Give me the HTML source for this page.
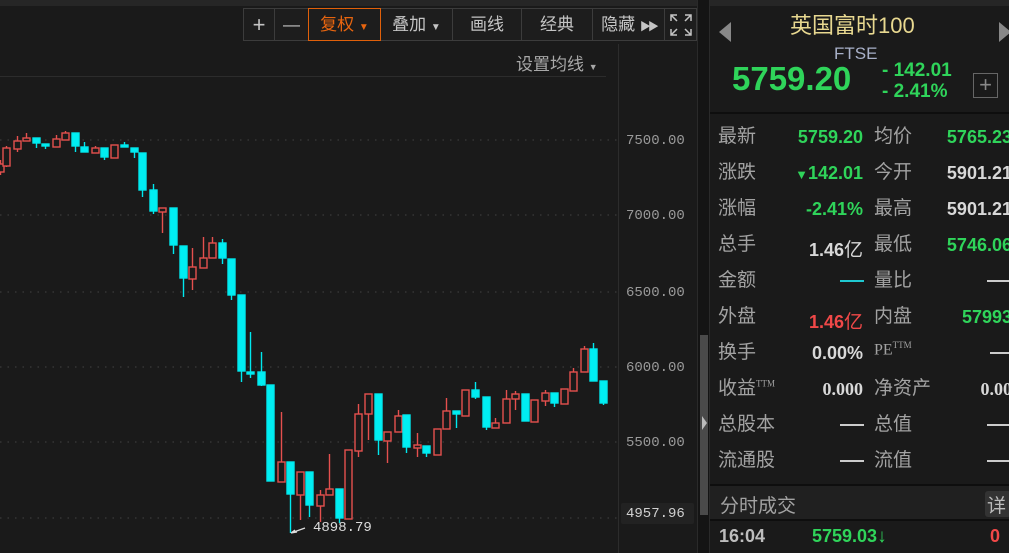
<!DOCTYPE html>
<html><head><meta charset="utf-8"><style>
*{margin:0;padding:0;box-sizing:border-box}
body{width:1009px;height:553px;background:#1a1a1a;position:relative;overflow:hidden;font-family:"Liberation Sans","Noto Sans CJK SC",sans-serif;color:#c8c8c8}
.a{position:absolute;white-space:nowrap}
.tb{position:absolute;top:8px;height:33px;border:1px solid #3c3c3c;background:#1d1d1d;font-size:17px;color:#c4c4c4;text-align:center;line-height:31px}
.ax{position:absolute;left:626px;font-family:"Liberation Mono",monospace;font-size:14px;color:#9a9a9a}
.lb{position:absolute;font-size:19px;color:#a2a2a2;font-family:"Liberation Sans","Noto Sans CJK SC",sans-serif;margin-top:-3px}
.v{position:absolute;font-size:18px;font-weight:bold;text-align:right;color:#d8d8d8;margin-top:2px}
.g{color:#2fd45a}.r{color:#f04848}
</style></head><body>
<div class="a" style="left:0;top:0;width:1009px;height:6px;background:#262626"></div>
<div class="tb" style="left:243px;width:32px;font-size:22px">+</div>
<div class="tb" style="left:274px;width:35px">—</div>
<div class="tb" style="left:308px;width:73px;border-color:#e0600a;color:#e8650f;z-index:2">复权 <span style="font-size:10px">▼</span></div>
<div class="tb" style="left:380px;width:73px">叠加 <span style="font-size:10px">▼</span></div>
<div class="tb" style="left:452px;width:70px">画线</div>
<div class="tb" style="left:521px;width:72px">经典</div>
<div class="tb" style="left:592px;width:73px">隐藏 <span style="font-size:11px;letter-spacing:-3px">▶▶</span></div>
<div class="tb" style="left:664px;width:33px"><svg width="24" height="24" viewBox="0 0 24 24" style="margin-top:4px" fill="none" stroke="#c4c4c4" stroke-width="1.5"><path d="M2 8V2h6M2 2l6 6M16 2h6v6M22 2l-6 6M2 16v6h6M2 22l6-6M22 16v6h-6M22 22l-6-6"/></svg></div>
<div class="a" style="left:516px;top:50px;font-size:17px;color:#a8a8a8">设置均线 <span style="font-size:9px">▼</span></div>
<div class="a" style="left:0;top:76px;width:606px;height:1px;background:#2c2c2c"></div>
<div class="a" style="left:618px;top:44px;width:1px;height:509px;background:#2c2c2c"></div>
<div class="a" style="left:697px;top:0;width:13px;height:553px;background:#141414;border-left:1px solid #2a2a2a;border-right:1px solid #2a2a2a"></div>
<div class="a" style="left:700px;top:335px;width:8px;height:180px;background:#4a4a4a"></div>
<div class="a" style="left:702px;top:416px;width:0;height:0;border-top:7px solid transparent;border-bottom:7px solid transparent;border-left:5px solid #bbb"></div>
<div class="ax" style="top:133px">7500.00</div>
<div class="ax" style="top:208px">7000.00</div>
<div class="ax" style="top:285px">6500.00</div>
<div class="ax" style="top:360px">6000.00</div>
<div class="ax" style="top:435px">5500.00</div>
<div class="a" style="left:621px;top:503px;width:73px;height:21px;background:#222;border-radius:2px"></div>
<div class="ax" style="top:506px;color:#d0d0d0">4957.96</div>
<svg class="a" style="left:0;top:0" width="618" height="553">
<g stroke="#3a3a3a" stroke-dasharray="1.5 6" stroke-width="1.2">
<line x1="0" y1="140" x2="618" y2="140"/><line x1="0" y1="215" x2="618" y2="215"/><line x1="0" y1="292" x2="618" y2="292"/><line x1="0" y1="367" x2="618" y2="367"/><line x1="0" y1="442" x2="618" y2="442"/><line x1="0" y1="518" x2="618" y2="518"/></g>
<g stroke-width="1.4">
<g stroke="#e5504e" fill="#1a1a1a">
<line x1="0.5" y1="160" x2="0.5" y2="175"/><rect x="-3" y="164" width="7" height="8"/>
<line x1="6.5" y1="146" x2="6.5" y2="167"/><rect x="3" y="148" width="7" height="18"/>
<line x1="17.5" y1="136" x2="17.5" y2="152"/><rect x="14" y="141" width="7" height="8"/>
<line x1="26.5" y1="133" x2="26.5" y2="141"/><rect x="23" y="138" width="7" height="3"/>
<line x1="56.5" y1="135" x2="56.5" y2="147"/><rect x="53" y="139" width="7" height="8"/>
<line x1="65.5" y1="131" x2="65.5" y2="140"/><rect x="62" y="133" width="7" height="7"/>
<line x1="95.5" y1="146" x2="95.5" y2="153"/><rect x="92" y="148" width="7" height="5"/>
<line x1="114.5" y1="145" x2="114.5" y2="158"/><rect x="111" y="145" width="7" height="13"/>
<line x1="162.5" y1="208" x2="162.5" y2="233"/><rect x="159" y="208" width="7" height="4"/>
<line x1="192.5" y1="248" x2="192.5" y2="290"/><rect x="189" y="267" width="7" height="12"/>
<line x1="203.5" y1="237" x2="203.5" y2="268"/><rect x="200" y="258" width="7" height="10"/>
<line x1="212.5" y1="237" x2="212.5" y2="258"/><rect x="209" y="243" width="7" height="15"/>
<line x1="281.5" y1="412" x2="281.5" y2="482"/><rect x="278" y="462" width="7" height="20"/>
<line x1="300.5" y1="472" x2="300.5" y2="520"/><rect x="297" y="472" width="7" height="23"/>
<line x1="320.5" y1="490" x2="320.5" y2="522"/><rect x="317" y="495" width="7" height="11"/>
<line x1="329.5" y1="454" x2="329.5" y2="495"/><rect x="326" y="489" width="7" height="6"/>
<rect x="345" y="450" width="7" height="69"/>
<line x1="358.5" y1="404" x2="358.5" y2="457"/><rect x="355" y="414" width="7" height="37"/>
<line x1="368.5" y1="394" x2="368.5" y2="440"/><rect x="365" y="394" width="7" height="20"/>
<line x1="387.5" y1="432" x2="387.5" y2="463"/><rect x="384" y="432" width="7" height="9"/>
<line x1="398.5" y1="410" x2="398.5" y2="432"/><rect x="395" y="416" width="7" height="16"/>
<line x1="417.5" y1="433" x2="417.5" y2="457"/><rect x="414" y="445" width="7" height="3"/>
<rect x="434" y="429" width="7" height="26"/>
<line x1="446.5" y1="398" x2="446.5" y2="429"/><rect x="443" y="411" width="7" height="18"/>
<rect x="462" y="390" width="7" height="26"/>
<line x1="495.5" y1="418" x2="495.5" y2="428"/><rect x="492" y="423" width="7" height="5"/>
<line x1="506.5" y1="390" x2="506.5" y2="423"/><rect x="503" y="399" width="7" height="24"/>
<line x1="515.5" y1="391" x2="515.5" y2="410"/><rect x="512" y="394" width="7" height="5"/>
<rect x="531" y="400" width="7" height="22"/>
<line x1="545.5" y1="390" x2="545.5" y2="406"/><rect x="542" y="393" width="7" height="8"/>
<rect x="561" y="389" width="7" height="15"/>
<line x1="573.5" y1="368" x2="573.5" y2="391"/><rect x="570" y="372" width="7" height="19"/>
<line x1="584.5" y1="346" x2="584.5" y2="372"/><rect x="581" y="349" width="7" height="23"/>
</g>
<g stroke="#00e8ee" fill="#00eef2">
<line x1="36.5" y1="138" x2="36.5" y2="148"/><rect x="33" y="138" width="7" height="5"/>
<line x1="45.5" y1="144" x2="45.5" y2="149"/><rect x="42" y="144" width="7" height="2"/>
<line x1="75.5" y1="133" x2="75.5" y2="152"/><rect x="72" y="133" width="7" height="13"/>
<line x1="84.5" y1="142" x2="84.5" y2="152"/><rect x="81" y="147" width="7" height="5"/>
<line x1="104.5" y1="148" x2="104.5" y2="160"/><rect x="101" y="148" width="7" height="9"/>
<line x1="124.5" y1="142" x2="124.5" y2="147"/><rect x="121" y="145" width="7" height="2"/>
<line x1="134.5" y1="148" x2="134.5" y2="158"/><rect x="131" y="148" width="7" height="4"/>
<line x1="142.5" y1="153" x2="142.5" y2="197"/><rect x="139" y="153" width="7" height="37"/>
<line x1="153.5" y1="184" x2="153.5" y2="214"/><rect x="150" y="190" width="7" height="21"/>
<line x1="173.5" y1="208" x2="173.5" y2="254"/><rect x="170" y="208" width="7" height="37"/>
<line x1="183.5" y1="246" x2="183.5" y2="297"/><rect x="180" y="246" width="7" height="32"/>
<line x1="222.5" y1="239" x2="222.5" y2="264"/><rect x="219" y="243" width="7" height="15"/>
<line x1="231.5" y1="259" x2="231.5" y2="300"/><rect x="228" y="259" width="7" height="36"/>
<line x1="241.5" y1="295" x2="241.5" y2="382"/><rect x="238" y="295" width="7" height="76"/>
<line x1="250.5" y1="332" x2="250.5" y2="378"/><rect x="247" y="372" width="7" height="2"/>
<line x1="261.5" y1="352" x2="261.5" y2="386"/><rect x="258" y="372" width="7" height="13"/>
<rect x="267" y="385" width="7" height="96"/>
<line x1="290.5" y1="462" x2="290.5" y2="533"/><rect x="287" y="462" width="7" height="32"/>
<line x1="309.5" y1="472" x2="309.5" y2="517"/><rect x="306" y="472" width="7" height="33"/>
<line x1="339.5" y1="489" x2="339.5" y2="523"/><rect x="336" y="489" width="7" height="29"/>
<line x1="378.5" y1="394" x2="378.5" y2="455"/><rect x="375" y="394" width="7" height="46"/>
<line x1="406.5" y1="415" x2="406.5" y2="453"/><rect x="403" y="415" width="7" height="32"/>
<line x1="426.5" y1="446" x2="426.5" y2="457"/><rect x="423" y="446" width="7" height="7"/>
<line x1="456.5" y1="411" x2="456.5" y2="428"/><rect x="453" y="411" width="7" height="3"/>
<line x1="475.5" y1="382" x2="475.5" y2="399"/><rect x="472" y="390" width="7" height="7"/>
<line x1="486.5" y1="397" x2="486.5" y2="430"/><rect x="483" y="397" width="7" height="30"/>
<rect x="522" y="394" width="7" height="27"/>
<line x1="554.5" y1="393" x2="554.5" y2="407"/><rect x="551" y="393" width="7" height="10"/>
<line x1="593.5" y1="343" x2="593.5" y2="381"/><rect x="590" y="349" width="7" height="32"/>
<line x1="603.5" y1="381" x2="603.5" y2="405"/><rect x="600" y="381" width="7" height="22"/>
</g></g>
<path d="M291 533l14-5M291 533l6-1M291 533l4-3" stroke="#ddd" stroke-width="1.3"/>
<text x="313" y="531" fill="#dcdcdc" font-family="Liberation Mono,monospace" font-size="14">4898.79</text>
</svg>
<!-- right panel -->
<div class="a" style="left:719px;top:22px;width:0;height:0;border-top:10px solid transparent;border-bottom:10px solid transparent;border-right:12px solid #888"></div>
<div class="a" style="left:999px;top:22px;width:0;height:0;border-top:10px solid transparent;border-bottom:10px solid transparent;border-left:12px solid #888"></div>
<div class="a" style="left:790px;top:8px;font-size:22px;color:#e8d890">英国富时100</div>
<div class="a" style="left:834px;top:44px;font-size:17px;color:#a8b0c8">FTSE</div>
<div class="a g" style="left:732px;top:60px;font-size:33px;font-weight:bold">5759.20</div>
<div class="a g" style="left:882px;top:60px;font-size:19px;font-weight:bold;line-height:21px">- 142.01<br>- 2.41%</div>
<div class="a" style="left:973px;top:73px;width:25px;height:25px;border:1px solid #666;color:#888;font-size:22px;line-height:22px;text-align:center">+</div>
<div class="a" style="left:710px;top:112px;width:299px;height:2px;background:#0e0e0e"></div>
<div class="lb" style="left:718px;top:124px">最新</div><div class="v g" style="left:760px;width:103px;top:125px">5759.20</div>
<div class="lb" style="left:874px;top:124px">均价</div><div class="v g" style="left:900px;width:112px;top:125px">5765.23</div>
<div class="lb" style="left:718px;top:160px">涨跌</div><div class="v g" style="left:760px;width:103px;top:161px"><span style="font-size:13px">▼</span>142.01</div>
<div class="lb" style="left:874px;top:160px">今开</div><div class="v" style="left:900px;width:112px;top:161px">5901.21</div>
<div class="lb" style="left:718px;top:196px">涨幅</div><div class="v g" style="left:760px;width:103px;top:197px">-2.41%</div>
<div class="lb" style="left:874px;top:196px">最高</div><div class="v" style="left:900px;width:112px;top:197px">5901.21</div>
<div class="lb" style="left:718px;top:232px">总手</div><div class="v" style="left:760px;width:103px;top:233px">1.46<span style="font-weight:normal;font-size:19px">亿</span></div>
<div class="lb" style="left:874px;top:232px">最低</div><div class="v g" style="left:900px;width:112px;top:233px">5746.06</div>
<div class="lb" style="left:718px;top:268px">金额</div><div class="a" style="left:840px;top:280px;width:24px;height:2px;background:#1fc8d0"></div>
<div class="lb" style="left:874px;top:268px">量比</div><div class="a" style="left:987px;top:280px;width:24px;height:2px;background:#ccc"></div>
<div class="lb" style="left:718px;top:304px">外盘</div><div class="v r" style="left:760px;width:103px;top:305px">1.46<span style="font-weight:normal;font-size:19px">亿</span></div>
<div class="lb" style="left:874px;top:304px">内盘</div><div class="v g" style="left:900px;width:112px;top:305px">57993</div>
<div class="lb" style="left:718px;top:340px">换手</div><div class="v" style="left:760px;width:103px;top:341px">0.00%</div>
<div class="lb" style="left:874px;font-family:'Liberation Serif',serif;font-size:16px;top:343px">PE<sup style="font-size:9px">TTM</sup></div><div class="a" style="left:990px;top:352px;width:22px;height:2px;background:#ccc"></div>
<div class="lb" style="left:718px;top:376px">收益<sup style="font-size:9px;font-family:'Liberation Serif',serif">TTM</sup></div><div class="v" style="left:760px;width:103px;top:377px;font-family:'Liberation Serif',serif">0.000</div>
<div class="lb" style="left:874px;top:376px">净资产</div><div class="v" style="left:900px;width:112px;top:377px;font-family:'Liberation Serif',serif">0.00</div>
<div class="lb" style="left:718px;top:412px">总股本</div><div class="a" style="left:840px;top:424px;width:24px;height:2px;background:#ccc"></div>
<div class="lb" style="left:874px;top:412px">总值</div><div class="a" style="left:987px;top:424px;width:24px;height:2px;background:#ccc"></div>
<div class="lb" style="left:718px;top:448px">流通股</div><div class="a" style="left:840px;top:460px;width:24px;height:2px;background:#ccc"></div>
<div class="lb" style="left:874px;top:448px">流值</div><div class="a" style="left:987px;top:460px;width:24px;height:2px;background:#ccc"></div>
<div class="a" style="left:710px;top:484px;width:299px;height:2px;background:#0e0e0e"></div>
<div class="a" style="left:710px;top:486px;width:299px;height:35px;background:#202020;border-bottom:2px solid #0e0e0e"></div>
<div class="lb" style="left:720px;top:494px">分时成交</div>
<div class="a" style="left:985px;top:491px;width:26px;height:26px;background:#333;border-radius:3px;font-size:19px;color:#bbb;padding-left:2px">详</div>
<div class="a" style="left:719px;top:526px;font-size:18px;font-weight:bold;color:#bdbdbd">16:04</div>
<div class="a g" style="left:812px;top:526px;font-size:18px;font-weight:bold">5759.03<span style="font-size:19px">↓</span></div>
<div class="a r" style="left:990px;top:526px;font-size:18px;font-weight:bold">0</div>
</body></html>
